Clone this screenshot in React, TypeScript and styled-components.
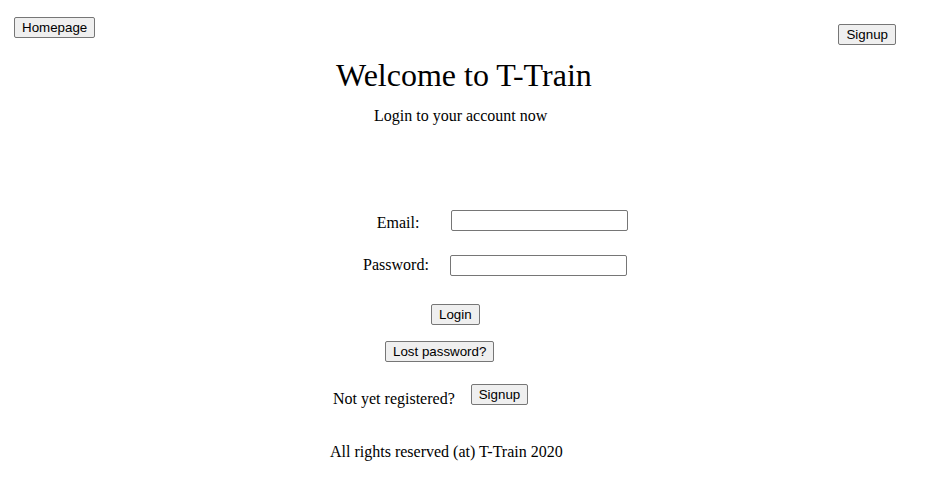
import styled, { createGlobalStyle } from "styled-components"

const GlobalStyle = createGlobalStyle`
	body {
		margin: 0;
		background: #ffffff;
		color: #000000;
		font-family: "Liberation Serif", "Times New Roman", serif;
		font-size: 16px;
	}
`

const Page = styled.div`
	width: 933px;
	min-height: 489px;
	display: flex;
	flex-direction: column;
`

const TopBar = styled.div`
	display: flex;
	justify-content: space-between;
	align-items: flex-start;
	padding: 17px 37px 0 14px;
	height: 40px;
`

const Button = styled.button<{ $offset?: number }>`
	font-family: "Liberation Sans", Arial, sans-serif;
	font-size: 13.333px;
	line-height: 15px;
	color: #000;
	background: #efefef;
	border: 1px solid #767676;
	border-radius: 2px;
	padding: 2px 7px;
	margin-top: ${(p) => p.$offset ?? 0}px;
	cursor: pointer;
`

const Row = styled.div<{ $indent: number; $top: number }>`
	display: flex;
	align-items: flex-start;
	margin-left: ${(p) => p.$indent}px;
	margin-top: ${(p) => p.$top}px;
`

const Title = styled.h1`
	margin: 0;
	font-size: 32px;
	font-weight: normal;
	line-height: 37px;
`

const Text = styled.p<{ $pad?: number }>`
	margin: 0;
	line-height: 18px;
	padding-top: ${(p) => p.$pad ?? 0}px;
`

const Form = styled.div`
	display: grid;
	grid-template-columns: 66px 177px;
	column-gap: 21px;
	row-gap: 24px;
	margin-left: 363px;
	margin-top: 85px;
	align-items: center;
`

const Label = styled.label<{ $shift?: number; $slide?: number }>`
	text-align: center;
	line-height: 18px;
	position: relative;
	top: ${(p) => p.$shift ?? 0}px;
	left: ${(p) => p.$slide ?? 0}px;
`

const Input = styled.input<{ $nudge?: number }>`
	box-sizing: border-box;
	width: 177px;
	height: 21px;
	border: 1px solid #767676;
	border-radius: 2px;
	padding: 1px 2px;
	margin-left: ${(p) => p.$nudge ?? 0}px;
	font-family: "Liberation Sans", Arial, sans-serif;
	font-size: 13.333px;
`

export default function App() {
	return (
		<Page>
			<GlobalStyle />
			<TopBar>
				<Button>Homepage</Button>
				<Button $offset={7}>Signup</Button>
			</TopBar>
			<Row $indent={336} $top={0}>
				<Title>Welcome to T-Train</Title>
			</Row>
			<Row $indent={374} $top={13}>
				<Text>Login to your account now</Text>
			</Row>
			<Form>
				<Label $shift={2} $slide={2} htmlFor="email">Email:</Label>
				<Input id="email" type="email" $nudge={1} />
				<Label $shift={-1} htmlFor="password">Password:</Label>
				<Input id="password" type="password" />
			</Form>
			<Row $indent={431} $top={28}>
				<Button>Login</Button>
			</Row>
			<Row $indent={385} $top={16}>
				<Button>Lost password?</Button>
			</Row>
			<Row $indent={333} $top={22}>
				<Text $pad={6}>Not yet registered?</Text>
				<Button style={{ marginLeft: 16 }}>Signup</Button>
			</Row>
			<Row $indent={330} $top={35}>
				<Text>All rights reserved (at) T-Train 2020</Text>
			</Row>
		</Page>
	)
}
